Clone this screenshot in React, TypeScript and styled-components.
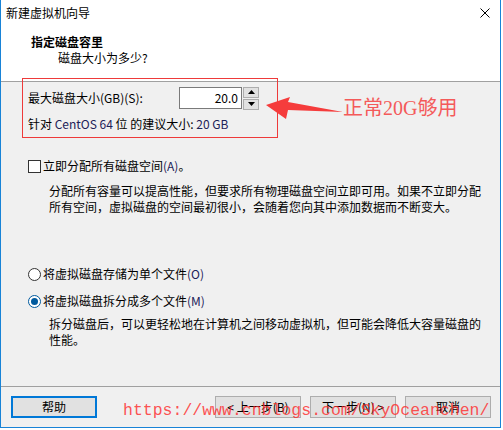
import styled, { createGlobalStyle } from 'styled-components';

const GlobalStyle = createGlobalStyle`
  body {
    margin: 0;
    background: #ffffff;
    font-family: "Noto Sans CJK SC", "Liberation Sans", sans-serif;
    font-size: 12px;
    color: #000;
  }
`;

const Window = styled.div`
  position: relative;
  width: 499px;
  height: 427px;
  background: #f0f0f0;
  border: 1px solid #1883d7;
  border-top: none;
  display: flex;
  flex-direction: column;
  overflow: hidden;
`;

const TitleBar = styled.div`
  height: 30px;
  box-sizing: border-box;
  background: #fff;
  display: flex;
  justify-content: space-between;
  align-items: flex-start;
  padding: 5px 10px 0 5px;
  line-height: 16px;
`;

const CloseIcon = styled.svg`
  margin-top: 3px;
`;

const Header = styled.div`
  height: 52px;
  box-sizing: border-box;
  background: #fff;
  border-bottom: 1px solid #a0a0a0;
  padding: 4px 0 0 30px;
  line-height: 16px;
`;

const HeaderTitle = styled.div`
  font-weight: bold;
`;

const HeaderSub = styled.div`
  padding-left: 27px;
`;

const Body = styled.div`
  height: 304px;
  box-sizing: border-box;
  padding: 5px 0 0 27px;
  line-height: 16px;
`;

const SpinRow = styled.div`
  display: flex;
  align-items: center;
  height: 22px;
`;

const SpinLabel = styled.div`
  width: 151px;
`;

const SpinInput = styled.div`
  width: 58px;
  height: 20px;
  border: 1px solid #7a7a7a;
  background: #fff;
  text-align: right;
  line-height: 20px;
  padding-right: 3px;
  box-sizing: content-box;
`;

const SpinButtons = styled.div`
  display: flex;
  flex-direction: column;
  gap: 1px;
  margin-left: 1px;
`;

const SpinButton = styled.div`
  width: 14px;
  height: 9px;
  border: 1px solid #adadad;
  background: #e1e1e1;
  display: flex;
  align-items: center;
  justify-content: center;
`;

const Line = styled.div<{ $top: number; $indent?: number }>`
  margin-top: ${(p) => p.$top}px;
  padding-left: ${(p) => p.$indent ?? 0}px;
`;

// ClearType gives the latin bits a navy tint in the screenshot
const Latin = styled.span`
  color: #1c2258;
`;

const OptionRow = styled.div<{ $top: number }>`
  display: flex;
  align-items: center;
  height: 16px;
  margin-top: ${(p) => p.$top}px;
  gap: 2px;
`;

const CheckBox = styled.div`
  width: 11px;
  height: 11px;
  border: 1px solid #333;
  background: #fff;
`;

const Radio = styled.div<{ $checked?: boolean }>`
  width: 11px;
  height: 11px;
  border-radius: 50%;
  border: 1px solid ${(p) => (p.$checked ? '#005a9e' : '#333')};
  background: #fff;
  display: flex;
  align-items: center;
  justify-content: center;
  &::after {
    content: '';
    display: ${(p) => (p.$checked ? 'block' : 'none')};
    width: 7px;
    height: 7px;
    border-radius: 50%;
    background: #005a9e;
  }
`;

const Footer = styled.div`
  flex: 1;
  border-top: 1px solid #a0a0a0;
  display: flex;
  align-items: flex-start;
  padding: 9px 9px 0 10px;
  gap: 9px;
`;

const Button = styled.div<{ $default?: boolean }>`
  width: ${(p) => (p.$default ? 82 : 84)}px;
  height: ${(p) => (p.$default ? 18 : 20)}px;
  border: ${(p) => (p.$default ? '2px solid #0078d7' : '1px solid #adadad')};
  background: #e1e1e1;
  display: flex;
  align-items: center;
  justify-content: center;
  line-height: 16px;
`;

const Spacer = styled.div`
  flex: 1;
`;

const RedBox = styled.div`
  position: absolute;
  left: 21px;
  top: 78px;
  width: 254px;
  height: 58px;
  border: 1px solid #ee3a3a;
`;

const Arrow = styled.svg`
  position: absolute;
  left: 0;
  top: 0;
`;

const Note = styled.div`
  position: absolute;
  left: 342px;
  top: 96px;
  font-family: "Liberation Serif", "Noto Sans CJK SC", serif;
  font-size: 20px;
  line-height: 24px;
  color: #f45a5a;
  white-space: nowrap;
`;

const Watermark = styled.div`
  position: absolute;
  left: 122px;
  top: 403px;
  font-family: "Liberation Mono", monospace;
  font-size: 16.5px;
  line-height: 16.5px;
  color: rgba(255, 40, 40, 0.8);
  white-space: nowrap;
`;

export default function App() {
  return (
    <>
      <GlobalStyle />
      <Window>
        <TitleBar>
          <span>新建虚拟机向导</span>
          <CloseIcon width='10' height='10' viewBox='0 0 10 10'>
            <path d='M0.5 0.5 L9.5 9.5 M9.5 0.5 L0.5 9.5' stroke='#000' strokeWidth='1' />
          </CloseIcon>
        </TitleBar>
        <Header>
          <HeaderTitle>指定磁盘容里</HeaderTitle>
          <HeaderSub>磁盘大小为多少?</HeaderSub>
        </Header>
        <Body>
          <SpinRow>
            <SpinLabel>最大磁盘大小(GB)(S):</SpinLabel>
            <SpinInput>20.0</SpinInput>
            <SpinButtons>
              <SpinButton>
                <svg width='7' height='4' viewBox='0 0 7 4'>
                  <path d='M0 4 L3.5 0 L7 4 Z' fill='#000' />
                </svg>
              </SpinButton>
              <SpinButton>
                <svg width='7' height='4' viewBox='0 0 7 4'>
                  <path d='M0 0 L3.5 4 L7 0 Z' fill='#000' />
                </svg>
              </SpinButton>
            </SpinButtons>
          </SpinRow>
          <Line $top={7}>
            针对 <Latin>CentOS 64</Latin> 位 的建议大小: <Latin>20 GB</Latin>
          </Line>
          <OptionRow $top={26}>
            <CheckBox />
            <span>
              立即分配所有磁盘空间<Latin>(A)</Latin>。
            </span>
          </OptionRow>
          <Line $top={9} $indent={21}>
            分配所有容量可以提高性能，但要求所有物理磁盘空间立即可用。如果不立即分配
            <br />
            所有空间，虚拟磁盘的空间最初很小，会随着您向其中添加数据而不断变大。
          </Line>
          <OptionRow $top={51}>
            <Radio />
            <span>
              将虚拟磁盘存储为单个文件<Latin>(O)</Latin>
            </span>
          </OptionRow>
          <OptionRow $top={11}>
            <Radio $checked />
            <span>
              将虚拟磁盘拆分成多个文件<Latin>(M)</Latin>
            </span>
          </OptionRow>
          <Line $top={7} $indent={21}>
            拆分磁盘后，可以更轻松地在计算机之间移动虚拟机，但可能会降低大容量磁盘的
            <br />
            性能。
          </Line>
        </Body>
        <Footer>
          <Button $default>帮助</Button>
          <Spacer />
          <Button>&lt; 上一步(B)</Button>
          <Button>下一步(N) &gt;</Button>
          <Button>取消</Button>
        </Footer>

        <RedBox />
        <Arrow width='360' height='130'>
          <polygon points='265,105 289,97 287,102 342,112 287,110 285,119' fill='#f53c3c' />
        </Arrow>
        <Note>正常20G够用</Note>
        <Watermark>https://www.cnblogs.com/SkyOceanchen/</Watermark>
      </Window>
    </>
  );
}
